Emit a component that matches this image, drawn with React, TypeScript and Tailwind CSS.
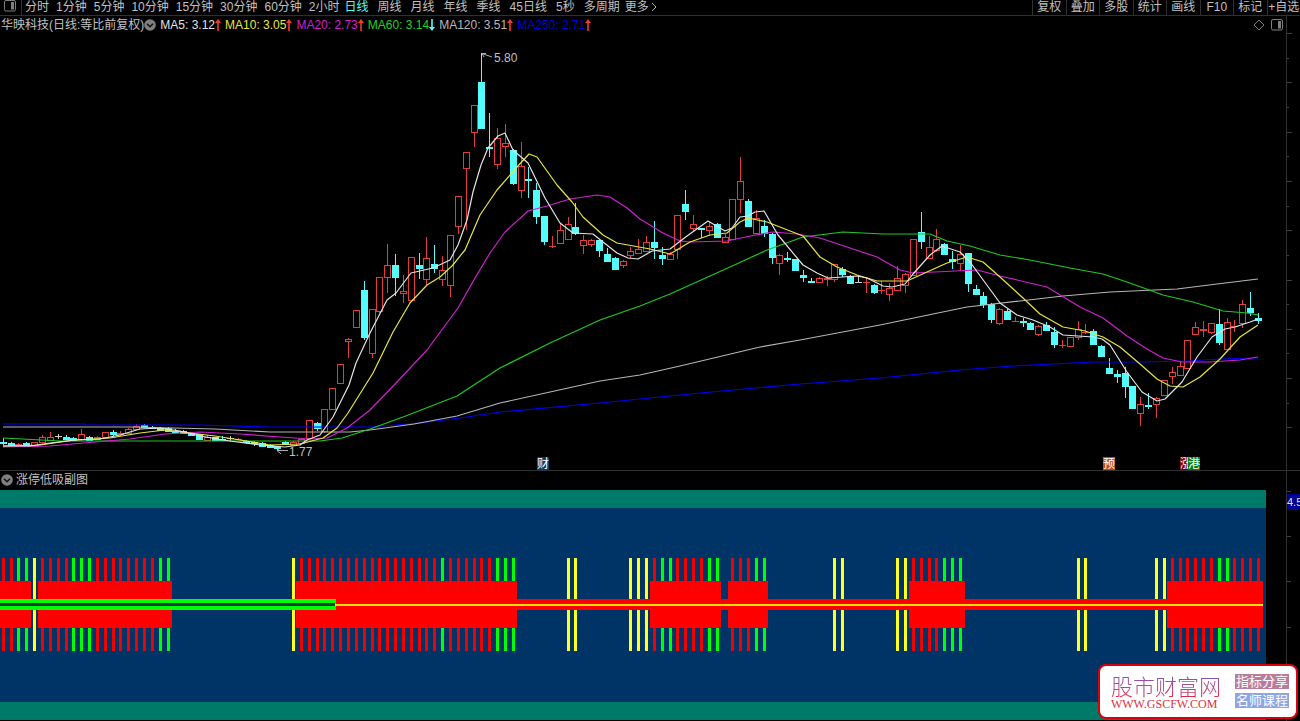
type Candle = [kind: 'r' | 'c' | 'w', top: number, bottom: number, high: number, low: number];

// One entry per trading day; values are heights on the price canvas.
const CANDLES: Candle[] = [
  ['c', 442, 443, 438, 445], ['c', 443, 445, 442, 446], ['r', 444, 444, 443, 445], ['c', 443, 446, 442, 446],
  ['r', 442, 446, 442, 446], ['r', 437, 442, 435, 442], ['r', 437, 440, 432, 440], ['w', 436, 436, 434, 439],
  ['c', 437, 439, 435, 440], ['c', 438, 440, 437, 441], ['r', 434, 439, 429, 440], ['c', 437, 440, 436, 440],
  ['r', 437, 439, 436, 440], ['r', 432, 437, 432, 438], ['c', 432, 434, 430, 436], ['r', 433, 434, 431, 436],
  ['r', 429, 433, 428, 434], ['r', 426, 429, 424, 430], ['c', 425, 427, 424, 428], ['c', 427, 428, 426, 429],
  ['c', 428, 430, 427, 431], ['c', 428, 431, 427, 431], ['c', 431, 432, 429, 433], ['c', 431, 433, 430, 433],
  ['c', 433, 435, 433, 435], ['c', 434, 439, 434, 439], ['r', 437, 440, 435, 440], ['c', 437, 440, 437, 441],
  ['c', 439, 440, 436, 441], ['w', 438, 438, 436, 441], ['r', 439, 439, 438, 440], ['c', 441, 442, 440, 444],
  ['c', 442, 443, 441, 446], ['c', 443, 446, 442, 446], ['c', 445, 447, 444, 448], ['c', 446, 448, 446, 450],
  ['c', 442, 444, 441, 445], ['r', 442, 445, 441, 446], ['r', 439, 443, 438, 443], ['r', 420, 438, 420, 438],
  ['c', 423, 428, 422, 431], ['r', 409, 431, 409, 433], ['r', 388, 409, 388, 409], ['r', 364, 383, 364, 383],
  ['r', 339, 341, 338, 358], ['r', 310, 327, 310, 327], ['c', 290, 337, 281, 340], ['r', 309, 353, 309, 358],
  ['r', 277, 311, 277, 313], ['r', 265, 277, 244, 293], ['c', 265, 277, 254, 296], ['r', 291, 293, 275, 303],
  ['r', 257, 300, 257, 300], ['c', 265, 268, 253, 279], ['r', 258, 279, 237, 285], ['c', 264, 268, 245, 273],
  ['r', 270, 279, 256, 286], ['r', 235, 285, 235, 297], ['r', 196, 226, 196, 234], ['r', 152, 168, 152, 230],
  ['r', 105, 132, 105, 147], ['c', 82, 128, 53, 128], ['c', 147, 148, 113, 157], ['r', 138, 164, 128, 169],
  ['r', 143, 146, 124, 157], ['c', 150, 183, 149, 185], ['r', 166, 190, 142, 198], ['c', 179, 180, 167, 198],
  ['c', 190, 216, 183, 224], ['c', 216, 241, 216, 245], ['r', 246, 246, 236, 248], ['r', 230, 243, 224, 243],
  ['r', 224, 239, 217, 239], ['c', 227, 233, 203, 235], ['r', 240, 245, 235, 254], ['r', 240, 244, 239, 247],
  ['c', 240, 250, 240, 257], ['c', 254, 261, 248, 262], ['c', 258, 269, 257, 269], ['r', 261, 265, 260, 268],
  ['r', 251, 255, 247, 259], ['r', 249, 253, 239, 254], ['r', 242, 251, 236, 251], ['c', 242, 247, 221, 259],
  ['c', 255, 258, 247, 265], ['r', 254, 259, 252, 259], ['r', 215, 249, 215, 259], ['c', 204, 211, 190, 220],
  ['r', 224, 228, 215, 231], ['c', 228, 229, 228, 238], ['r', 226, 230, 222, 236], ['c', 224, 237, 223, 238],
  ['r', 237, 242, 234, 243], ['r', 199, 239, 199, 239], ['r', 181, 199, 157, 213], ['c', 201, 226, 199, 226],
  ['r', 218, 233, 210, 234], ['c', 226, 233, 220, 237], ['c', 234, 257, 233, 264], ['r', 255, 263, 254, 275],
  ['c', 258, 259, 252, 262], ['c', 259, 270, 259, 271], ['c', 275, 277, 270, 282], ['c', 281, 282, 278, 283],
  ['r', 278, 282, 277, 283], ['r', 278, 279, 276, 286], ['r', 264, 279, 264, 282], ['c', 269, 274, 267, 277],
  ['c', 276, 283, 275, 283], ['w', 282, 282, 276, 283], ['r', 282, 282, 277, 293], ['c', 285, 292, 284, 294],
  ['r', 290, 290, 281, 294], ['r', 288, 294, 283, 301], ['r', 278, 290, 266, 290], ['r', 274, 285, 273, 293],
  ['r', 239, 275, 239, 275], ['c', 232, 241, 212, 249], ['r', 247, 258, 236, 258], ['r', 239, 250, 229, 252],
  ['c', 244, 254, 243, 255], ['c', 259, 261, 251, 269], ['r', 254, 263, 245, 271], ['c', 253, 283, 253, 292],
  ['c', 289, 294, 285, 295], ['c', 296, 304, 292, 308], ['c', 304, 319, 303, 323], ['r', 309, 323, 308, 325],
  ['c', 311, 319, 309, 320], ['r', 321, 321, 317, 322], ['c', 321, 322, 318, 327], ['c', 323, 329, 322, 329],
  ['r', 326, 334, 325, 336], ['c', 325, 330, 322, 330], ['c', 332, 344, 327, 348], ['r', 345, 345, 340, 348],
  ['r', 337, 346, 337, 346], ['r', 329, 337, 321, 340], ['r', 332, 332, 324, 334], ['c', 331, 344, 329, 345],
  ['c', 346, 356, 345, 357], ['c', 368, 373, 358, 374], ['c', 374, 376, 370, 383], ['c', 373, 386, 367, 398],
  ['c', 386, 408, 386, 409], ['r', 404, 413, 397, 426], ['c', 405, 406, 393, 409], ['r', 398, 404, 397, 418],
  ['r', 380, 395, 380, 396], ['r', 372, 376, 367, 384], ['r', 366, 375, 362, 376], ['r', 340, 368, 340, 369],
  ['r', 327, 334, 322, 334], ['r', 329, 330, 321, 337], ['r', 323, 332, 323, 334], ['c', 324, 342, 309, 345],
  ['r', 322, 349, 318, 350], ['r', 326, 326, 320, 332], ['r', 304, 323, 300, 328], ['c', 308, 312, 292, 316],
  ['c', 318, 320, 313, 324],
];

const AVERAGES = [
  { color: '#0000f4', points: '3,424 85,424 86,425 200,425 270,427 370,427 420,423 460,418 500,412 600,403 700,393 800,384 880,378 930,373 960,370 1013,366 1053,364 1093,362 1140,362 1187,361 1220,359 1258,358' },
  { color: '#b4b4b4', points: '3,427 130,427 215,429 270,432 350,432 370,430 414,424 457,416 500,403 550,392 600,381 640,375 680,366 760,347 800,340 880,325 933,314 967,307 1020,301 1063,296 1110,292 1177,289 1217,284 1258,279' },
  { color: '#20c820', points: '3,438 60,441 150,441 320,441 342,438 370,429 403,417 457,396 500,368 550,343 600,320 640,306 670,294 710,276 730,267 767,250 803,237 843,232 883,234 930,234 947,241 970,246 1000,255 1030,260 1070,268 1103,274 1127,282 1163,295 1193,302 1223,311 1247,313 1258,315' },
  { color: '#d020d0', points: '3,447 50,446 95,442 130,439 165,434 200,432 240,434 280,437 310,439 327,438 347,428 370,410 397,382 427,350 458,308 475,278 490,253 505,232 528,211 547,206 570,199 597,195 610,197 627,208 640,219 663,233 680,241 690,242 727,241 750,236 773,232 797,234 820,238 847,247 877,257 900,270 913,273 977,270 1000,276 1047,287 1080,307 1103,318 1127,336 1147,349 1163,358 1182,362 1210,362 1240,360 1258,357' },
  { color: '#e6e640', points: '3,446 40,445 75,440 110,438 140,433 165,430 190,433 215,436 240,440 270,445 300,444 323,438 337,428 348,413 373,373 393,332 410,303 427,285 440,277 452,266 465,250 480,215 497,190 517,167 529,154 537,157 557,185 572,202 583,217 603,235 617,243 650,249 670,254 690,242 710,235 727,233 740,222 748,218 767,222 803,236 820,257 837,267 857,275 877,281 907,281 947,263 967,257 983,262 1000,277 1023,298 1040,314 1063,327 1085,331 1103,337 1120,347 1140,364 1157,379 1170,386 1183,387 1200,377 1220,359 1240,337 1258,325' },
  { color: '#e4e4e4', points: '3,446 30,446 50,443 75,440 100,439 120,435 140,429 160,428 180,431 200,436 230,441 260,445 285,447 300,445 307,440 320,435 333,417 349,385 356,363 370,333 387,300 396,293 411,273 433,268 450,260 458,245 467,220 473,192 481,165 488,148 498,136 505,133 513,150 528,163 545,198 560,223 573,233 593,234 603,242 617,253 628,258 638,259 652,251 670,249 687,236 708,221 725,231 732,228 740,217 748,216 755,212 764,211 778,235 803,265 817,273 828,278 857,276 867,278 883,286 892,287 905,284 913,274 930,255 942,246 960,252 970,262 1000,303 1017,315 1033,320 1050,327 1063,335 1093,337 1102,339 1110,345 1127,372 1142,392 1157,401 1165,399 1182,382 1197,357 1212,337 1225,329 1235,327 1250,322 1258,319' },
];

const CANDLE_COLORS = { r: '#e23c3c', c: '#54fcfc', w: '#d0d0d0' };
const dayX = (n: number) => Math.round(2.8 + n * 7.845);

const GREEN_DAYS = [2, 3, 9, 10, 11, 20, 21, 56, 63, 64, 65, 84, 85, 90, 91, 96, 97, 120, 121, 122, 155, 156];
const YELLOW_DAYS = [4, 37, 72, 73, 80, 81, 82, 106, 107, 114, 115, 137, 138, 147, 148];
const RUNS = [
  { from: 0, to: 3, left: 0, right: 31 },
  { from: 5, to: 21, left: 38, right: 172 },
  { from: 38, to: 65, left: 296, right: 517 },
  { from: 83, to: 91, left: 650, right: 721 },
  { from: 93, to: 97, left: 728, right: 768 },
  { from: 116, to: 122, left: 909, right: 965 },
  { from: 149, to: 160, left: 1167, right: 1263 },
];

const INTRADAY = ['分时', '1分钟', '5分钟', '10分钟', '15分钟', '30分钟', '60分钟', '2小时'];
const LONGER = ['日线', '周线', '月线', '年线', '季线', '45日线', '5秒', '多周期'];
const TOOLS = ['复权', '叠加', '多股', '统计', '画线', 'F10', '标记', '+自选'];

const LEGEND = [
  { text: 'MA5: 3.12', tone: 'text-[#e0e0e0]', up: true },
  { text: 'MA10: 3.05', tone: 'text-[#e6e640]', up: true },
  { text: 'MA20: 2.73', tone: 'text-[#d020d0]', up: true },
  { text: 'MA60: 3.14', tone: 'text-[#20d020]', up: false },
  { text: 'MA120: 3.51', tone: 'text-[#b8b8b8]', up: true },
  { text: 'MA250: 2.71', tone: 'text-[#0000d8]', up: true },
];

function Arrow({ up }: { up: boolean }) {
  return (
    <svg viewBox="0 0 6 12" className="h-3 w-1.5 shrink-0" aria-hidden="true">
      {up ? (
        <path d="M3 0 L6 4 H3.8 V12 H2.2 V4 H0 Z" fill="#f03c2c" />
      ) : (
        <path d="M3 12 L6 8 H3.8 V0 H2.2 V8 H0 Z" fill="#54fcfc" />
      )}
    </svg>
  );
}

function Collapse({ label }: { label: string }) {
  return (
    <button type="button" aria-label={label} className="shrink-0">
      <svg viewBox="0 0 12 12" className="size-3">
        <circle cx="6" cy="6" r="5.8" fill="#808080" />
        <path d="M3 4.8 L6 7.8 L9 4.8" fill="none" stroke="#101010" strokeWidth="1.5" />
      </svg>
    </button>
  );
}

function PanelIcon() {
  return (
    <svg viewBox="0 0 12 12" className="size-3">
      <rect x="0.5" y="0.5" width="11" height="10.5" rx="1.5" fill="none" stroke="#808080" />
      <rect x="7" y="2" width="3" height="7.5" fill="#808080" />
    </svg>
  );
}

function CandleMark({ candle, n }: { candle: Candle; n: number }) {
  const [kind, top, bottom, high, low] = candle;
  const x = dayX(n);
  const color = CANDLE_COLORS[kind];
  const hollow = kind === 'r' && bottom - top > 1;
  return (
    <g fill={color}>
      {high < top && <rect x={x} y={high} width="1" height={top - high} />}
      {low > bottom && <rect x={x} y={bottom} width="1" height={low - bottom} />}
      {hollow ? (
        <rect x={x - 2.5} y={top + 0.5} width="6" height={bottom - top} fill="#000" stroke={color} />
      ) : (
        <rect x={x - 3} y={top} width="7" height={Math.max(1, bottom - top + 1)} />
      )}
    </g>
  );
}

function Tag({ x, y, width, fill, text }: { x: number; y: number; width: number; fill: string; text: string }) {
  return (
    <g>
      <rect x={x} y={y} width={width} height="13" fill={fill} />
      <text x={x} y={y + 11} fontSize="12" fill="#fff">{text}</text>
    </g>
  );
}

function PriceChart() {
  return (
    <svg viewBox="0 36 1286 434" className="block h-auto w-full" role="img" aria-label="日线">
      <g shapeRendering="crispEdges">
        {CANDLES.map((candle, n) => <CandleMark key={n} candle={candle} n={n} />)}
      </g>
      {AVERAGES.map((line) => (
        <polyline key={line.color} points={line.points} fill="none" stroke={line.color} strokeWidth="1.2" strokeLinejoin="round" />
      ))}
      <g fill="none" stroke="#b0b0b0">
        <path d="M482 53.5 L492 57 M482 53.5 H486 M482 53.5 L484 57" />
        <path d="M277 450.5 H288 M277 450.5 L281 447.5 M277 450.5 L281 454" />
      </g>
      <g fontSize="12" fill="#c0c0c0">
        <text x="494" y="62">5.80</text>
        <text x="289" y="456">1.77</text>
      </g>
      <Tag x={537} y={457} width={12} fill="#0c3c6c" text="财" />
      <Tag x={1103} y={457} width={12} fill="#c05010" text="预" />
      <Tag x={1180} y={457} width={8} fill="#800000" text="涨" />
      <Tag x={1188} y={457} width={12} fill="#008010" text="港" />
    </svg>
  );
}

function DayBar({ n, fill }: { n: number; fill: string }) {
  return <rect x={dayX(n) - 1} y="558" width="3" height="93" fill={fill} />;
}

function SignalChart() {
  return (
    <svg viewBox="0 490 1286 231" className="block h-auto w-full" role="img" aria-label="涨停低吸副图" shapeRendering="crispEdges">
      <rect x="0" y="490" width="1266" height="230" fill="#007a68" />
      <rect x="0" y="508" width="1266" height="194" fill="#003366" />
      {YELLOW_DAYS.map((n) => <DayBar key={n} n={n} fill="#ffff20" />)}
      {RUNS.map((run) => (
        <g key={run.from}>
          {Array.from({ length: run.to - run.from + 1 }, (_, i) => run.from + i).map((n) => (
            <DayBar key={n} n={n} fill={GREEN_DAYS.includes(n) ? '#00ff00' : '#f00000'} />
          ))}
          <rect x={run.left} y="581" width={run.right - run.left} height="47" fill="#ff0000" />
        </g>
      ))}
      <rect x="0" y="599" width="336" height="11" fill="#00ff00" />
      <rect x="0" y="603" width="335" height="3" fill="#003c48" />
      <rect x="336" y="599" width="927" height="11" fill="#ff0000" />
      <rect x="335" y="604" width="928" height="2" fill="#ffe000" />
    </svg>
  );
}

export default function App() {
  return (
    <main className="relative min-h-screen overflow-hidden bg-black font-['Liberation_Sans','Noto_Sans_CJK_SC',sans-serif] text-xs text-[#c0c0c0]">
      <header className="flex h-4 items-center justify-between border-b border-[#303030] whitespace-nowrap">
        <nav className="flex h-full items-center leading-3">
          <button type="button" aria-label="侧栏" className="flex h-full w-[22px] items-center border-r border-[#303030] pb-1 pl-1">
            <PanelIcon />
          </button>
          <div className="flex gap-[7px] pb-0.5 pl-[3px]">
            {INTRADAY.map((label) => <button key={label} type="button">{label}</button>)}
          </div>
          <div className="flex gap-[9px] pb-0.5 pl-[5px]">
            {LONGER.map((label) => (
              <button key={label} type="button" className={label === '日线' ? 'text-[#54fcfc]' : ''}>{label}</button>
            ))}
          </div>
          <button type="button" className="flex items-center gap-0.5 pb-0.5 pl-[5px]">
            更多
            <svg viewBox="0 0 6 10" className="h-2.5 w-1.5" aria-hidden="true">
              <path d="M1 1 L5 5 L1 9" fill="none" stroke="#b0b0b0" />
            </svg>
          </button>
        </nav>
        <div className="grid h-full w-[268px] grid-cols-8 leading-3">
          {TOOLS.map((label) => (
            <button key={label} type="button" className="flex items-center justify-center border-l border-[#303030] pb-0.5">{label}</button>
          ))}
        </div>
      </header>

      <section className="flex">
        <div className="min-w-0 flex-1">
          <div className="flex h-5 items-center justify-between pr-[3px] pb-0.5 pl-px whitespace-nowrap leading-4">
            <div className="flex items-center">
              <h1>华映科技(日线:等比前复权)</h1>
              <Collapse label="收起主图" />
              <ul className="flex gap-1 pl-1">
                {LEGEND.map((item) => (
                  <li key={item.text} className={`flex items-center ${item.tone}`}>
                    {item.text}
                    <Arrow up={item.up} />
                  </li>
                ))}
              </ul>
            </div>
            <div className="flex items-center gap-1.5">
              <button type="button" aria-label="标记点">
                <svg viewBox="0 0 12 12" className="size-3">
                  <path d="M6 1 L11 6 L6 11 L1 6 Z" fill="none" stroke="#808080" />
                </svg>
              </button>
              <button type="button" aria-label="显示侧栏"><PanelIcon /></button>
            </div>
          </div>
          <PriceChart />
        </div>
        <svg viewBox="0 16 14 454" className="block w-3.5 shrink-0" shapeRendering="crispEdges" aria-hidden="true">
          <rect x="0" y="16" width="1" height="454" fill="#303030" />
          {Array.from({ length: 17 }, (_, i) => (
            <rect key={i} x="1" y={Math.round(33 + i * 24.65)} width={i % 2 ? 2 : 5} height="1" fill="#404040" />
          ))}
        </svg>
      </section>

      <section className="flex border-t border-[#303030]">
        <div className="min-w-0 flex-1">
          <div className="flex h-[19px] items-center gap-[3px] pb-0.5 pl-px">
            <Collapse label="收起副图" />
            <h2 className="leading-4">涨停低吸副图</h2>
          </div>
          <SignalChart />
        </div>
        <svg viewBox="0 471 14 250" className="block w-3.5 shrink-0" aria-hidden="true">
          <rect x="0" y="471" width="1" height="250" fill="#303030" />
          {[491, 536, 581, 627, 672].map((y) => <rect key={y} x="1" y={y} width="4" height="1" fill="#404040" />)}
          <rect x="1" y="494" width="13" height="16" fill="#000090" />
          <text x="1" y="506" fontSize="11" fill="#e0e0e0">4.5</text>
        </svg>
      </section>

      <a href="#home" className="absolute right-0.5 bottom-0.5 flex items-center gap-3.5 rounded-lg border-2 border-[#d8000c] bg-white pt-1.5 pr-[7px] pb-[7px] pl-[11px] whitespace-nowrap text-white">
        <span className="flex flex-col">
          <span className="bg-linear-to-b from-[#6a50d0] to-[#e02040] bg-clip-text font-['Noto_Sans_CJK_SC',sans-serif] text-[22px] leading-[26px] font-light text-transparent">股市财富网</span>
          <span className="font-['Liberation_Serif',serif] text-xs leading-3 text-[#e03040]">WWW.GSCFW.COM</span>
        </span>
        <span className="flex flex-col gap-1 text-[13px] leading-[15px]">
          <span className="bg-[#b87c9c] px-px">指标分享</span>
          <span className="bg-[#8ea4e4] px-px">名师课程</span>
        </span>
      </a>
    </main>
  );
}
